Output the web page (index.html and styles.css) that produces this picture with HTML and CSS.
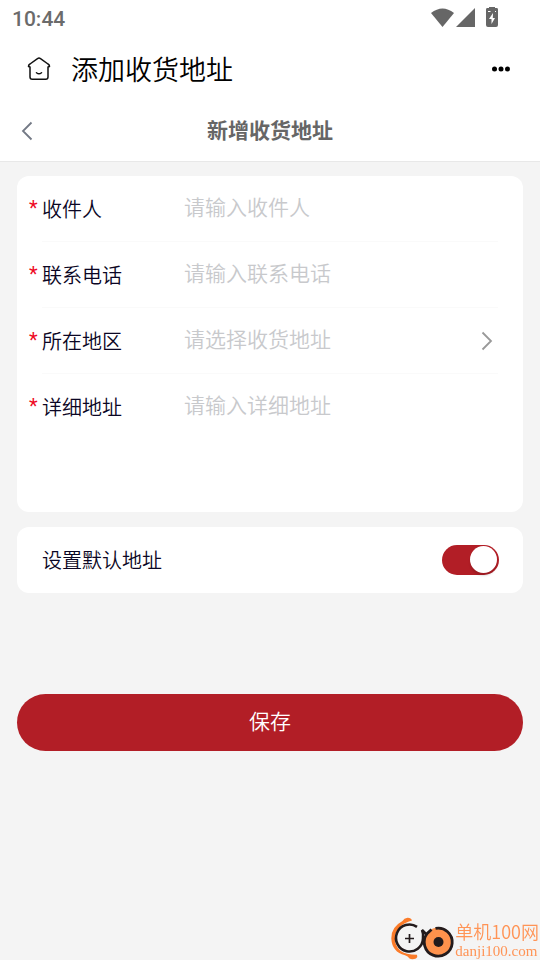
FILE: index.html
```html
<!DOCTYPE html>
<html lang="zh-CN">
<head>
<meta charset="utf-8">
<meta name="viewport" content="width=device-width, initial-scale=1">
<title>添加收货地址</title>
<link rel="stylesheet" href="styles.css">
</head>
<body>
<div class="top">
  <div class="status">
    <span class="clock">10:44</span>
    <svg class="status-icons" width="68" height="22" viewBox="0 0 68 22" fill="#666" aria-hidden="true">
      <path d="M0 6Q11.500-3 23 6L11.500 20Z"/>
      <path d="M44 1V20H25Z"/>
      <path fill-rule="evenodd" d="M58 1V0H64V1H66Q67 1 67 2.500V18Q67 20 65 20H57Q55 20 55 18V2.500Q55 1 56 1ZM62 6L58 12H60.500V17L64 11H61.800Z"/>
      <path d="M57 4.500H59.500M64 4.500H65" stroke="#fff" stroke-width="1"/>
    </svg>
  </div>
  <header class="appbar">
    <button class="icon-button" type="button" aria-label="首页">
      <svg width="24" height="24" viewBox="0 0 24 24" fill="none" stroke="#111" stroke-width="1.500" stroke-linejoin="round" stroke-linecap="round">
        <path d="M3 10V20Q3 22.300 5.300 22.300H18.700Q21 22.300 21 20V10M3 10L1.500 9.500Q1.300 8 3 7L10.500 1.600Q12 .6 13.500 1.600L21 7Q22.700 8 22.500 9.500L21 10M9.500 15.700Q12 17.800 14.500 15.700"/>
      </svg>
    </button>
    <h1 class="app-title">添加收货地址</h1>
    <button class="icon-button" type="button" aria-label="更多">
      <svg width="20" height="6" viewBox="0 0 20 6"><circle cx="3.500" cy="3" r="2.500"/><circle cx="10" cy="3" r="2.500"/><circle cx="16.500" cy="3" r="2.500"/></svg>
    </button>
  </header>
  <nav class="navbar">
    <button class="icon-button" type="button" aria-label="返回">
      <svg width="12" height="20" viewBox="0 0 12 20" fill="none" stroke="#737985" stroke-width="1.800"><path d="M10.500 1.500L2 10L10.500 18.500"/></svg>
    </button>
    <h2 class="nav-title">新增收货地址</h2>
  </nav>
</div>
<form class="form">
  <div class="card fields">
    <div class="field">
      <label class="label required" for="name">收件人</label>
      <input class="control" id="name" type="text" placeholder="请输入收件人">
    </div>
    <div class="field">
      <label class="label required" for="phone">联系电话</label>
      <input class="control" id="phone" type="tel" placeholder="请输入联系电话">
    </div>
    <div class="field">
      <label class="label required" for="region">所在地区</label>
      <input class="control" id="region" type="text" placeholder="请选择收货地址" readonly>
      <svg class="chevron" width="12" height="20" viewBox="0 0 12 20" fill="none" stroke="#999" stroke-width="1.800"><path d="M1.500 1.500L10 10L1.500 18.500"/></svg>
    </div>
    <div class="field field-tall">
      <label class="label required" for="address">详细地址</label>
      <textarea class="control" id="address" rows="3" placeholder="请输入详细地址"></textarea>
    </div>
  </div>
  <div class="card default-row">
    <label class="label" for="default">设置默认地址</label>
    <input class="switch" id="default" type="checkbox" role="switch" checked>
  </div>
  <button class="save" type="submit">保存</button>
</form>
<div class="watermark">
  <svg class="watermark-logo" width="64" height="42" viewBox="0 0 64 42" fill="none" aria-hidden="true">
    <path d="M21 2.500Q20-.5 16.500-.3Q13 0 11.500 3Q0 9 .3 20.500Q1 34 14 37.300Q17 38 18.500 40.500Q21 42 25 40.500Q27 39 26 36.800Q4 37 4 20Q5 7 21 2.500Z" fill="#fb7b29"/>
    <circle cx="18.500" cy="20.500" r="14.500" fill="#f4f4f4"/>
    <path d="M26 8.800A13.500 13.500 0 1 0 32 20.500Q32.500 15 31 12L36 17" stroke="#231b1c" stroke-width="2.600"/>
    <path d="M14 20.500H23M18.500 16V25" stroke="#231b1c" stroke-width="1.700"/>
    <circle cx="47.500" cy="24" r="14.500" fill="#ff924c"/>
    <path d="M44.500 10.400A14 14 0 1 1 36.200 15.500L40.500 11.500" stroke="#231b1c" stroke-width="2.800"/>
    <circle cx="47.500" cy="24" r="5" fill="#231b1c"/>
  </svg>
  <div class="watermark-text">
    <span class="watermark-name">单机100网</span>
    <span class="watermark-site">danji100.com</span>
  </div>
</div>
</body>
</html>
```
FILE: styles.css
```css
* {
  box-sizing: border-box;
}

body {
  margin: 0;
  min-height: 100vh;
  background: #f4f4f4;
  color: #0b0624;
  font-family: "Noto Sans CJK SC", sans-serif;
}

button,
input,
textarea {
  margin: 0;
  padding: 0;
  border: 0;
  background: none;
  font-family: inherit;
}

svg {
  display: block;
}

.top {
  background: #fff;
  border-bottom: 1px solid #e8e8e8;
}

.status {
  display: flex;
  justify-content: space-between;
  align-items: center;
  height: 38px;
  padding: 0 41px 0 12px;
}

.clock {
  color: #6b6b6b;
  font: 500 21px/38px Roboto, sans-serif;
}

.status-icons {
  margin-bottom: 2px;
}

.appbar {
  display: flex;
  align-items: center;
  gap: 20px;
  height: 62px;
  padding: 0 29px 0 27px;
}

.icon-button {
  flex: none;
  cursor: pointer;
}

.app-title {
  flex: 1;
  margin: 0;
  color: #000;
  font-size: 27px;
  font-weight: 350;
  line-height: 40px;
}

.navbar {
  display: grid;
  grid-template-columns: 12px 1fr 12px;
  align-items: center;
  height: 61px;
  padding: 0 21px;
}

.nav-title {
  margin: 0;
  padding-bottom: 4px;
  color: #666;
  font-size: 21px;
  font-weight: 700;
  line-height: 32px;
  text-align: center;
}

.form {
  display: flex;
  flex-direction: column;
  gap: 15px;
  padding: 14px 17px;
}

.card {
  border-radius: 12px;
  background: #fff;
}

.fields {
  padding: 0 25px;
}

.field {
  display: flex;
  align-items: center;
  height: 66px;
  padding-right: 5px;
  border-bottom: 1px solid #fafafa;
}

.field-tall {
  align-items: flex-start;
  height: 138px;
  padding-top: 17px;
  border-bottom: 0;
}

.label {
  position: relative;
  flex: none;
  width: 142px;
  font-size: 20px;
  font-weight: 350;
  line-height: 32px;
}

.required::before {
  content: "*";
  position: absolute;
  left: -13px;
  top: -1px;
  color: #ee0a24;
  font-family: Roboto, sans-serif;
  font-weight: 400;
}

.control {
  flex: 1;
  min-width: 0;
  padding-bottom: 6px;
  color: inherit;
  font-size: 21px;
  font-weight: 350;
  line-height: 32px;
  outline: 0;
  resize: none;
}

.field-tall .control {
  line-height: 26px;
}

.control::placeholder {
  color: #c8c9cc;
  opacity: 1;
}

.default-row {
  display: flex;
  align-items: center;
  justify-content: space-between;
  height: 66px;
  padding: 0 24px 0 25px;
}

.switch {
  display: flex;
  justify-content: flex-end;
  width: 57px;
  height: 30px;
  padding: 1px 2px;
  border-radius: 15px;
  background: #b21e26;
  appearance: none;
  cursor: pointer;
}

.switch::before {
  content: "";
  width: 27px;
  height: 27px;
  border-radius: 50%;
  background: #fff;
  box-shadow: 0 3px 2px rgba(0, 0, 0, 0.12);
}

.switch:not(:checked) {
  justify-content: flex-start;
  background: #ddd;
}

.save {
  height: 57px;
  margin-top: 86px;
  padding-bottom: 5px;
  border-radius: 29px;
  background: #b21e26;
  color: #fff;
  font-size: 21px;
  font-weight: 350;
  line-height: 32px;
  cursor: pointer;
}

.watermark {
  position: fixed;
  right: 1px;
  bottom: 0;
  display: flex;
  align-items: center;
  color: #ff9456;
}

.watermark-logo {
  overflow: visible;
}

.watermark-text {
  display: flex;
  flex-direction: column;
}

.watermark-name {
  font: 350 18px/23px "Noto Sans CJK SC", sans-serif;
}

.watermark-site {
  font: 15px/16px "Liberation Serif", serif;
}
```
